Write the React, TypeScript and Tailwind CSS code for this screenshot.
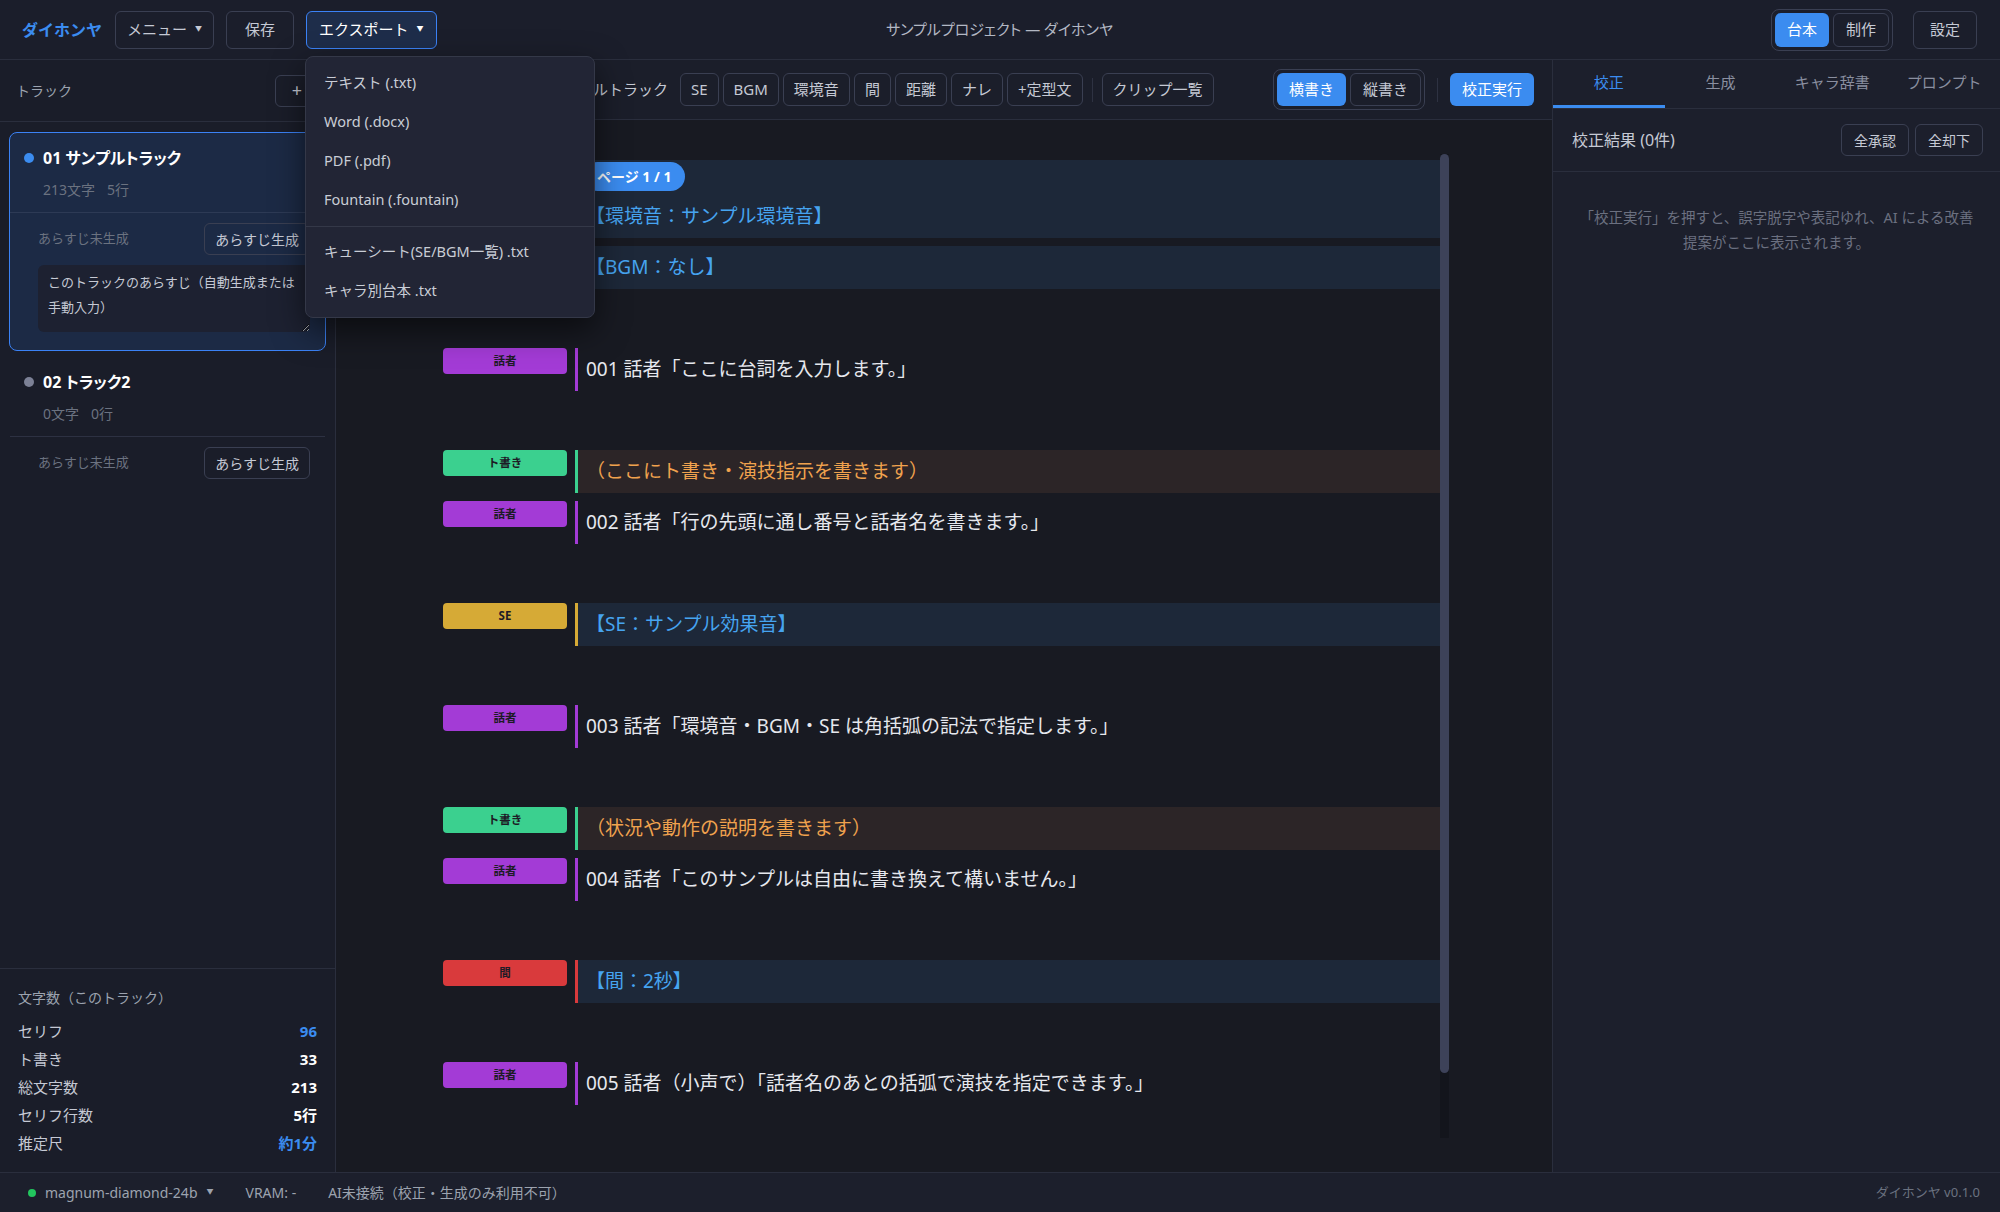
import React from "react";

const btn =
  "h-[33px] px-[10px] rounded-md border border-[#3a3f52] text-[15px] text-[#c5c9d4] flex items-center whitespace-nowrap";

type Kind = "line" | "direction" | "se" | "pause" | "ambient" | "bgm";

const kinds: Record<Kind, { tag: string; bar: string; band: string; text: string }> = {
  line: { tag: "bg-[#a33bd6]", bar: "border-[#a33bd6]", band: "", text: "text-[#e6e8ee]" },
  direction: { tag: "bg-[#3bd08f]", bar: "border-[#3bd08f]", band: "bg-[#2c2527]", text: "text-[#f0a24e]" },
  se: { tag: "bg-[#d6aa36]", bar: "border-[#d6aa36]", band: "bg-[#1d2839]", text: "text-[#46a4f0]" },
  pause: { tag: "bg-[#d93a3c]", bar: "border-[#d93a3c]", band: "bg-[#1d2839]", text: "text-[#46a4f0]" },
  ambient: { tag: "bg-[#2f9ed8]", bar: "border-[#2f9ed8]", band: "bg-[#1d2839]", text: "text-[#46a4f0]" },
  bgm: { tag: "bg-[#2f9ed8]", bar: "border-[#2f9ed8]", band: "bg-[#1d2839]", text: "text-[#46a4f0]" },
};

type Row = { kind: Kind; tag: string; text: string; page?: boolean } | null;

const rows: Row[] = [
  { kind: "ambient", tag: "環境音", text: "【環境音：サンプル環境音】", page: true },
  { kind: "bgm", tag: "BGM", text: "【BGM：なし】" },
  null,
  { kind: "line", tag: "話者", text: "001 話者「ここに台詞を入力します。」" },
  null,
  { kind: "direction", tag: "ト書き", text: "（ここにト書き・演技指示を書きます）" },
  { kind: "line", tag: "話者", text: "002 話者「行の先頭に通し番号と話者名を書きます。」" },
  null,
  { kind: "se", tag: "SE", text: "【SE：サンプル効果音】" },
  null,
  { kind: "line", tag: "話者", text: "003 話者「環境音・BGM・SE は角括弧の記法で指定します。」" },
  null,
  { kind: "direction", tag: "ト書き", text: "（状況や動作の説明を書きます）" },
  { kind: "line", tag: "話者", text: "004 話者「このサンプルは自由に書き換えて構いません。」" },
  null,
  { kind: "pause", tag: "間", text: "【間：2秒】" },
  null,
  { kind: "line", tag: "話者", text: "005 話者（小声で）「話者名のあとの括弧で演技を指定できます。」" },
  null,
  null,
];

const ScriptRow = ({ row }: { row: Row }) => {
  if (!row) return <div className="h-[43px] shrink-0" />;
  const s = kinds[row.kind];
  return (
    <div className="flex items-start gap-2 shrink-0">
      <div
        className={`w-[124px] h-[26px] shrink-0 rounded-[4px] flex items-center justify-center text-[11.5px] font-bold text-[#1d1b26] ${s.tag}`}
      >
        {row.tag}
      </div>
      <div className={`flex-1 min-w-0 border-l-[3px] ${s.bar} ${s.band}`}>
        {row.page && (
          <div className="pt-[2px] pb-[4px] pl-[5px]">
            <span className="inline-flex h-[29px] items-center rounded-full bg-[#3b8cf0] px-[14px] text-[14px] font-bold text-white">
              ページ 1 / 1
            </span>
          </div>
        )}
        <div className={`h-[43px] flex items-center pl-2 text-[19px] whitespace-nowrap ${s.text}`}>{row.text}</div>
      </div>
    </div>
  );
};

const exportItems = ["テキスト (.txt)", "Word (.docx)", "PDF (.pdf)", "Fountain (.fountain)"];
const exportItems2 = ["キューシート(SE/BGM一覧) .txt", "キャラ別台本 .txt"];

const ExportMenu = () => (
  <div className="absolute left-[-1px] top-[calc(100%+7px)] z-50 w-[290px] rounded-lg border border-[#343848] bg-[#222535] pt-[7px] pb-[6px] shadow-[0_12px_32px_rgba(0,0,0,0.55)]">
    {exportItems.map((t) => (
      <div key={t} className="h-[39px] px-[18px] flex items-center text-[14.5px] text-[#c9cdd6]">
        {t}
      </div>
    ))}
    <div className="my-[6px] h-px bg-[#343848]" />
    {exportItems2.map((t) => (
      <div key={t} className="h-[39px] px-[18px] flex items-center text-[14.5px] text-[#c9cdd6]">
        {t}
      </div>
    ))}
  </div>
);

const stats = [
  { label: "セリフ", value: "96", cls: "text-[#3b8cf0]" },
  { label: "ト書き", value: "33", cls: "text-white" },
  { label: "総文字数", value: "213", cls: "text-white" },
  { label: "セリフ行数", value: "5行", cls: "text-white" },
  { label: "推定尺", value: "約1分", cls: "text-[#3b8cf0]" },
];

export default function App() {
  return (
    <div className="h-screen w-full flex flex-col overflow-hidden bg-[#181a22] text-[#c5c9d4] font-['Noto_Sans','Noto_Sans_CJK_JP',sans-serif]">
      {/* Header */}
      <header className="h-[60px] shrink-0 grid grid-cols-[1fr_auto_1fr] items-center pl-[22px] pr-[23px] bg-[#1b1e2b] border-b border-[#2a2e3d]">
        <div className="flex items-center gap-3">
          <span className="text-[16px] font-bold text-[#3b8cf0] mr-[1px] whitespace-nowrap">ダイホンヤ</span>
          <button className="h-[38px] px-[11px] rounded-md border border-[#3a3f52] text-[15px] text-[#c5c9d4] flex items-center gap-2 whitespace-nowrap">
            メニュー <span className="text-[7px]">▼</span>
          </button>
          <button className="h-[38px] px-[18px] rounded-md border border-[#3a3f52] text-[15px] text-[#c5c9d4]">保存</button>
          <div className="relative">
            <button className="h-[38px] px-3 rounded-md border border-[#3b82f6] bg-[#1e2d4a] text-[15px] text-white flex items-center gap-2 whitespace-nowrap">
              エクスポート <span className="text-[7px]">▼</span>
            </button>
            <ExportMenu />
          </div>
        </div>
        <div className="text-[15px] text-[#b3b8c4] whitespace-nowrap [font-feature-settings:'palt']">サンプルプロジェクト — ダイホンヤ</div>
        <div className="flex items-center justify-end gap-5">
          <div className="flex gap-1 p-[3px] rounded-lg border border-[#3a3f52]">
            <button className="h-[34px] px-3 rounded-md bg-[#3b8cf0] text-[15px] text-white">台本</button>
            <button className="h-[34px] px-3 rounded-md border border-[#3a3f52] text-[15px] text-[#c5c9d4]">制作</button>
          </div>
          <button className="h-[38px] px-4 rounded-md border border-[#3a3f52] text-[15px] text-[#c5c9d4]">設定</button>
        </div>
      </header>

      <div className="flex flex-1 min-h-0">
        {/* Sidebar */}
        <aside className="w-[336px] shrink-0 flex flex-col border-r border-[#2a2e3d] bg-[#1a1d29]">
          <div className="h-[62px] shrink-0 flex items-center justify-between px-4 border-b border-[#2a2e3d]">
            <span className="text-[14px] text-[#9ca3af]">トラック</span>
            <button className="h-[32px] w-[44px] rounded-md border border-[#3a3f52] text-[18px] text-[#c5c9d4]">+</button>
          </div>
          <div className="flex-1 px-[9px] pt-[10px] flex flex-col gap-[5px]">
            <div className="rounded-lg border-[1.5px] border-[#3b82f6] bg-[#1c2a45]">
              <div className="px-[14px] pt-[14px] pb-[13px] border-b border-[#2d3a55]">
                <div className="flex items-center gap-[9px] h-[22px]">
                  <span className="w-[10px] h-[10px] rounded-full bg-[#3b8cf0]" />
                  <span className="text-[16px] font-bold text-white [font-feature-settings:'palt']">01 サンプルトラック</span>
                </div>
                <div className="mt-[10px] h-[20px] pl-[19px] text-[14px] text-[#6b7280]">
                  213文字<span className="ml-3">5行</span>
                </div>
              </div>
              <div className="pl-[28px] pr-[15px] pt-[10px] pb-[18px]">
                <div className="flex items-center justify-between">
                  <span className="text-[13px] text-[#6b7280]">あらすじ未生成</span>
                  <button className="h-[32px] px-[10px] rounded-md border border-[#3a3f52] text-[14px] text-[#c5c9d4]">あらすじ生成</button>
                </div>
                <textarea
                  readOnly
                  defaultValue="このトラックのあらすじ（自動生成または手動入力）"
                  className="mt-[10px] block w-[272px] h-[67px] rounded-md bg-[#1d2131] px-[10px] py-[5px] text-[13px] leading-[25px] text-[#c5c9d4] outline-none [color-scheme:dark]"
                />
              </div>
            </div>
            <div className="border-[1.5px] border-transparent">
              <div className="px-[14px] pt-[14px] pb-[13px] border-b border-[#2d3142]">
                <div className="flex items-center gap-[9px] h-[22px]">
                  <span className="w-[10px] h-[10px] rounded-full bg-[#7c8196]" />
                  <span className="text-[16px] font-bold text-white [font-feature-settings:'palt']">02 トラック2</span>
                </div>
                <div className="mt-[10px] h-[20px] pl-[19px] text-[14px] text-[#6b7280]">
                  0文字<span className="ml-3">0行</span>
                </div>
              </div>
              <div className="pl-[28px] pr-[15px] pt-[10px] flex items-center justify-between">
                <span className="text-[13px] text-[#6b7280]">あらすじ未生成</span>
                <button className="h-[32px] px-[10px] rounded-md border border-[#3a3f52] text-[14px] text-[#c5c9d4]">あらすじ生成</button>
              </div>
            </div>
          </div>
          <div className="shrink-0 border-t border-[#2a2e3d] px-[18px] pt-[18px] pb-[15px]">
            <div className="h-[20px] flex items-center text-[14px] text-[#9ca3af] mb-[10px]">文字数（このトラック）</div>
            {stats.map((s) => (
              <div key={s.label} className="h-[28px] flex items-center justify-between text-[15px]">
                <span className="text-[#c5c9d4]">{s.label}</span>
                <span className={`font-bold ${s.cls}`}>{s.value}</span>
              </div>
            ))}
          </div>
        </aside>

        {/* Editor */}
        <main className="flex-1 min-w-0 flex flex-col bg-[#181a22]">
          <div className="h-[60px] shrink-0 flex items-center pl-4 pr-[18px] border-b border-[#2a2e3d] bg-[#1b1e2a]">
            <span className="w-[316px] shrink-0 text-right text-[15px] text-[#c5c9d4] whitespace-nowrap">01 サンプルトラック</span>
            <div className="ml-3 flex items-center gap-1">
              {["SE", "BGM", "環境音", "間", "距離", "ナレ", "+定型文"].map((t) => (
                <button key={t} className={btn}>
                  {t}
                </button>
              ))}
            </div>
            <div className="mx-[9px] h-[24px] w-px bg-[#2e3242]" />
            <button className={btn}>クリップ一覧</button>
            <div className="ml-auto flex items-center">
              <div className="flex gap-1 p-[3px] rounded-lg border border-[#3a3f52]">
                <button className="h-[33px] px-3 rounded-md bg-[#3b8cf0] text-[15px] text-white">横書き</button>
                <button className="h-[33px] px-3 rounded-md border border-[#3a3f52] text-[15px] text-[#c5c9d4]">縦書き</button>
              </div>
              <div className="mx-[12px] h-[24px] w-px bg-[#2e3242]" />
              <button className="h-[33px] px-3 rounded-md bg-[#3b8cf0] text-[15px] text-white">校正実行</button>
            </div>
          </div>
          <div className="flex-1 min-h-0 pl-[107px] pr-[103px] py-[34px]">
            <div className="h-full flex">
              <div className="flex-1 min-w-0 overflow-hidden pt-[6px] flex flex-col gap-2">
                {rows.map((r, i) => (
                  <ScriptRow key={i} row={r} />
                ))}
              </div>
              {/* scrollbar */}
              <div className="w-[9px] shrink-0 flex flex-col bg-[#13151c]">
                <div className="h-[919px] rounded-full bg-[#3d4259]" />
              </div>
            </div>
          </div>
        </main>

        {/* Right panel */}
        <aside className="w-[448px] shrink-0 flex flex-col border-l border-[#2a2e3d] bg-[#1c1f2c]">
          <div className="h-[49px] shrink-0 flex border-b border-[#2a2e3d]">
            {["校正", "生成", "キャラ辞書", "プロンプト"].map((t, i) => (
              <div
                key={t}
                className={`flex-1 flex items-center justify-center text-[15px] border-b-[3px] ${
                  i === 0 ? "text-[#3b8cf0] border-[#3b8cf0]" : "text-[#8a8fa0] border-transparent"
                }`}
              >
                {t}
              </div>
            ))}
          </div>
          <div className="h-[63px] shrink-0 flex items-center justify-between pl-[19px] pr-[17px] border-b border-[#2a2e3d]">
            <span className="text-[16px] text-[#c5c9d4]">校正結果 (0件)</span>
            <div className="flex gap-[6px]">
              <button className="h-[32px] px-3 rounded-md border border-[#3a3f52] text-[14px] text-[#c5c9d4]">全承認</button>
              <button className="h-[32px] px-3 rounded-md border border-[#3a3f52] text-[14px] text-[#c5c9d4]">全却下</button>
            </div>
          </div>
          <div className="px-[20px] pt-[33px] text-center text-[14.5px] leading-[25px] text-[#6b7080]">
            「校正実行」を押すと、誤字脱字や表記ゆれ、AI による改善
            <br />
            提案がここに表示されます。
          </div>
        </aside>
      </div>

      {/* Status bar */}
      <footer className="h-[40px] shrink-0 flex items-center pl-[28px] pr-[20px] border-t border-[#2a2e3d] bg-[#1c1f2c] text-[14px] text-[#9ca3af]">
        <div className="flex items-center gap-8">
          <span className="flex items-center gap-[9px]">
            <span className="w-[8px] h-[8px] rounded-full bg-[#22c55e]" />
            magnum-diamond-24b <span className="text-[7px]">▼</span>
          </span>
          <span>VRAM: -</span>
          <span>AI未接続（校正・生成のみ利用不可）</span>
        </div>
        <span className="ml-auto text-[13px] text-[#6b7280]">ダイホンヤ v0.1.0</span>
      </footer>
    </div>
  );
}
